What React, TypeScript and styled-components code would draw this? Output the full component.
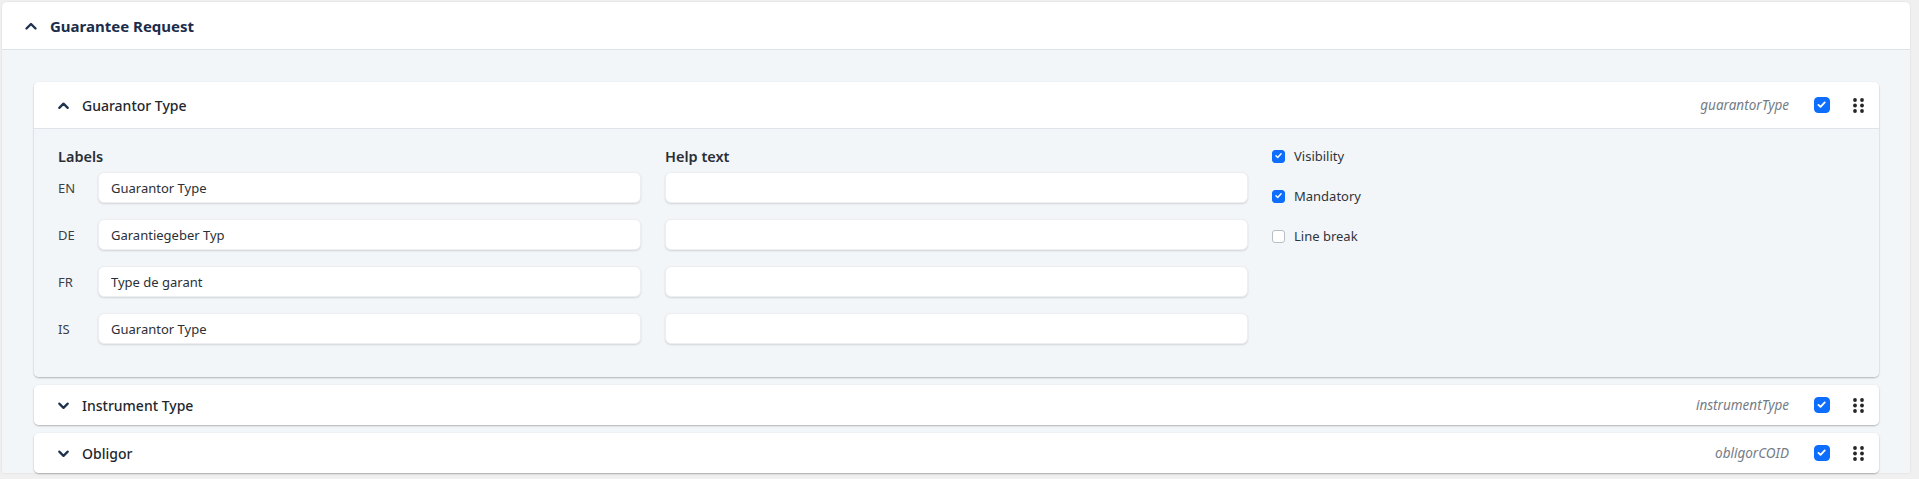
import React from "react";
import styled, { createGlobalStyle } from "styled-components";

const GlobalStyle = createGlobalStyle`
  body {
    margin: 0;
    background: #f0f0f1;
    font-family: "Noto Sans", "Open Sans", sans-serif;
    color: #2b2f36;
  }
`;

type Field = {
  title: string;
  key: string;
  open?: boolean;
};

const langs = [
  { code: "EN", label: "Guarantor Type" },
  { code: "DE", label: "Garantiegeber Typ" },
  { code: "FR", label: "Type de garant" },
  { code: "IS", label: "Guarantor Type" },
];

const options = [
  { name: "Visibility", checked: true },
  { name: "Mandatory", checked: true },
  { name: "Line break", checked: false },
];

const fields: Field[] = [
  { title: "Guarantor Type", key: "guarantorType", open: true },
  { title: "Instrument Type", key: "instrumentType" },
  { title: "Obligor", key: "obligorCOID" },
];

function Chevron({ up, size }: { up?: boolean; size: number }) {
  return (
    <svg width={size} height={size} viewBox="0 0 16 16" fill="none">
      <path
        d={up ? "M3.5 10.5 8 6l4.5 4.5" : "M3.5 6 8 10.5 12.5 6"}
        stroke="currentColor"
        strokeWidth="2.4"
        strokeLinecap="round"
        strokeLinejoin="round"
      />
    </svg>
  );
}

function Grip() {
  return (
    <svg width="11" height="15" viewBox="0 0 11 15">
      {[2, 9].map((cx) =>
        [2, 7.5, 13].map((cy) => (
          <circle key={`${cx}-${cy}`} cx={cx} cy={cy} r="1.9" fill="#262626" />
        ))
      )}
    </svg>
  );
}

function Check({ checked, size }: { checked: boolean; size: number }) {
  return (
    <Box $checked={checked} $size={size}>
      {checked && (
        <svg width={size * 0.7} height={size * 0.7} viewBox="0 0 16 16" fill="none">
          <path
            d="M3.5 8.5 6.5 11.3 12.5 5"
            stroke="#fff"
            strokeWidth="2.6"
            strokeLinecap="round"
            strokeLinejoin="round"
          />
        </svg>
      )}
    </Box>
  );
}

export default function App() {
  return (
    <>
      <GlobalStyle />
      <Page>
        <Section>
          <SectionHeader>
            <SectionChevron>
              <Chevron up size={16} />
            </SectionChevron>
            <SectionTitle>Guarantee Request</SectionTitle>
          </SectionHeader>
          <SectionBody>
            {fields.map((f) => (
              <FieldCard key={f.key}>
                <FieldHeader $open={!!f.open}>
                  <FieldChevron>
                    <Chevron up={f.open} size={15} />
                  </FieldChevron>
                  <FieldTitle>{f.title}</FieldTitle>
                  <FieldKey>{f.key}</FieldKey>
                  <Check checked size={16} />
                  <GripWrap>
                    <Grip />
                  </GripWrap>
                </FieldHeader>
                {f.open && (
                  <FieldBody>
                    <Column>
                      <ColumnTitle>Labels</ColumnTitle>
                      <Rows>
                        {langs.map((l) => (
                          <Row key={l.code}>
                            <Lang>{l.code}</Lang>
                            <Input defaultValue={l.label} />
                          </Row>
                        ))}
                      </Rows>
                    </Column>
                    <Column>
                      <ColumnTitle>Help text</ColumnTitle>
                      <Rows>
                        {langs.map((l) => (
                          <Row key={l.code}>
                            <Input defaultValue="" />
                          </Row>
                        ))}
                      </Rows>
                    </Column>
                    <Options>
                      {options.map((o) => (
                        <Option key={o.name}>
                          <Check checked={o.checked} size={13} />
                          <span>{o.name}</span>
                        </Option>
                      ))}
                    </Options>
                  </FieldBody>
                )}
              </FieldCard>
            ))}
          </SectionBody>
        </Section>
      </Page>
    </>
  );
}

const Page = styled.div`
  padding: 2px 9px 0 2px;
  height: 477px;
  overflow: hidden;
`;

const Section = styled.section`
  background: #f3f6f9;
  border-radius: 5px 5px 0 0;
  box-shadow: 0 0 2px rgba(0, 0, 0, 0.12);
`;

const SectionHeader = styled.div`
  height: 47px;
  background: #fff;
  border-radius: 5px 5px 0 0;
  border-bottom: 1px solid #dfe4ea;
  display: flex;
  align-items: center;
  padding-left: 21px;
`;

const SectionChevron = styled.span`
  display: flex;
  color: #1e3250;
  width: 27px;
`;

const SectionTitle = styled.h2`
  margin: 0;
  font-size: 15px;
  font-weight: 700;
  color: #1b2d4b;
`;

const SectionBody = styled.div`
  padding: 32px 31px 0 32px;
  display: flex;
  flex-direction: column;
  gap: 8px;
`;

const FieldCard = styled.div`
  background: #fff;
  border-radius: 5px;
  box-shadow: 0 1px 2px rgba(0, 0, 0, 0.28), 0 0 1px rgba(0, 0, 0, 0.08);
  overflow: hidden;
`;

const FieldHeader = styled.div<{ $open: boolean }>`
  height: ${(p) => (p.$open ? "46px" : "40px")};
  display: flex;
  align-items: center;
  padding: 0 15px 0 22px;
  background: #fff;
  border-bottom: ${(p) => (p.$open ? "1px solid #dfe4ea" : "none")};
`;

const FieldChevron = styled.span`
  display: flex;
  color: #1e3250;
  width: 26px;
`;

const FieldTitle = styled.span`
  font-size: 14px;
  font-weight: 500;
  color: #23272d;
  flex: 1;
`;

const FieldKey = styled.span`
  font-size: 13.5px;
  font-style: italic;
  color: #747c86;
  margin-right: 25px;
`;

const GripWrap = styled.span`
  display: flex;
  margin-left: 23px;
`;

const Box = styled.span<{ $checked: boolean; $size: number }>`
  width: ${(p) => p.$size}px;
  height: ${(p) => p.$size}px;
  box-sizing: border-box;
  border-radius: ${(p) => (p.$size > 14 ? 4 : 3)}px;
  background: ${(p) => (p.$checked ? "#0d6efd" : "#fff")};
  border: 1px solid ${(p) => (p.$checked ? "#0d6efd" : "#b9bec5")};
  display: inline-flex;
  align-items: center;
  justify-content: center;
  flex-shrink: 0;
`;

const FieldBody = styled.div`
  background: #f3f6f9;
  padding: 17px 24px 33px;
  display: grid;
  grid-template-columns: repeat(3, 1fr);
  column-gap: 24px;
`;

const Column = styled.div`
  display: flex;
  flex-direction: column;
`;

const ColumnTitle = styled.div`
  font-size: 14.5px;
  font-weight: 600;
  line-height: 20px;
  color: #2b2f36;
  margin-bottom: 6px;
`;

const Rows = styled.div`
  display: flex;
  flex-direction: column;
  gap: 16px;
`;

const Row = styled.div`
  display: flex;
  align-items: center;
`;

const Lang = styled.span`
  width: 40px;
  font-size: 13px;
  color: #3a3f46;
`;

const Input = styled.input`
  flex: 1;
  height: 31px;
  box-sizing: border-box;
  border: 1px solid #eceef1;
  border-radius: 6px;
  background: #fff;
  box-shadow: 0 1px 2px rgba(0, 0, 0, 0.14);
  padding: 0 12px;
  font-family: inherit;
  font-size: 13px;
  color: #2b2f36;
  outline: none;
`;

const Options = styled.div`
  display: flex;
  flex-direction: column;
  gap: 20px;
`;

const Option = styled.label`
  display: flex;
  align-items: center;
  gap: 9px;
  height: 20px;
  font-size: 13px;
  color: #2f343b;
`;
